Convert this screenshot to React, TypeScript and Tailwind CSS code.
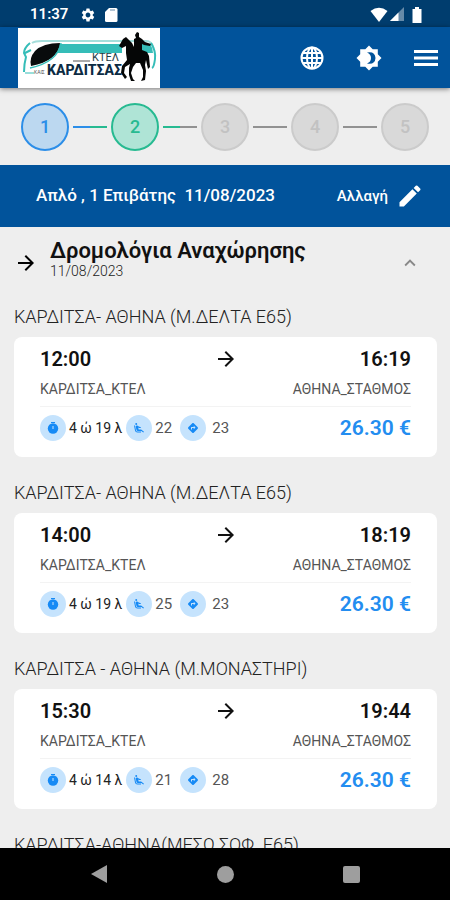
import type { ComponentType } from 'react';
import { MdAirlineSeatReclineExtra, MdArrowForward, MdDirections, MdEdit, MdExpandLess, MdSettings } from 'react-icons/md';

const routes = [
  { title: 'ΚΑΡΔΙΤΣΑ- ΑΘΗΝΑ (Μ.ΔΕΛΤΑ Ε65)', departs: '12:00', arrives: '16:19', duration: '4 ώ 19 λ', seats: 22, stops: 23 },
  { title: 'ΚΑΡΔΙΤΣΑ- ΑΘΗΝΑ (Μ.ΔΕΛΤΑ Ε65)', departs: '14:00', arrives: '18:19', duration: '4 ώ 19 λ', seats: 25, stops: 23 },
  { title: 'ΚΑΡΔΙΤΣΑ - ΑΘΗΝΑ (Μ.ΜΟΝΑΣΤΗΡΙ)', departs: '15:30', arrives: '19:44', duration: '4 ώ 14 λ', seats: 21, stops: 28 },
];

const steps = [
  { circle: 'border-[#2c8ee8] bg-[#bcd8f0] text-[#2c8ee8]', line: 'from-[#2c8ee8] to-[#27ba91]' },
  { circle: 'border-[#27ba91] bg-[#afe4d6] text-[#27ba91]', line: 'from-[#27ba91] to-[#929292]' },
  { circle: 'border-[#cbcbcb] bg-[#d9d9d9] text-[#c2c2c2]', line: 'from-[#929292] to-[#929292]' },
  { circle: 'border-[#cbcbcb] bg-[#d9d9d9] text-[#c2c2c2]', line: 'from-[#929292] to-[#929292]' },
  { circle: 'border-[#cbcbcb] bg-[#d9d9d9] text-[#c2c2c2]', line: '' },
];

const StatusBar = () => (
  <div className="flex h-[27px] shrink-0 items-center bg-[#003d6e] pt-0.5 pr-7 pl-[30px] text-white">
    <span className="text-[15px] font-semibold">11:37</span>
    <MdSettings className="ml-3 size-4" />
    <svg viewBox="0 0 14 16" className="ml-2 h-4 w-3.5" fill="currentColor">
      <path d="M5 1h7q1.500 0 1.500 1.500v11q0 1.500-1.500 1.500H2.500Q1 15 1 13.500V5z" />
      <path d="M6 3h5" stroke="#003d6e" strokeWidth="1.500" opacity="0.400" />
    </svg>
    <div className="ml-auto flex items-center">
      <svg viewBox="0 0 18 16" className="h-4 w-[18px]" fill="currentColor">
        <path d="M0.500 4Q9-2.500 17.500 4L9 15z" />
      </svg>
      <svg viewBox="0 0 15 15" className="ml-0.5 h-[15px] w-[15px]" fill="currentColor">
        <path d="M14 0v14H0z" opacity="0.400" />
        <path d="M8.500 5.500V14H0z" />
      </svg>
      <svg viewBox="0 0 10 16" className="ml-[7px] h-4 w-2.5" fill="currentColor">
        <path d="M3 0h4v2h2.500v14h-9V2H3z" />
      </svg>
    </div>
  </div>
);

const Logo = () => (
  <svg viewBox="0 0 142 60" className="h-[60px] w-[142px] bg-white" role="img" aria-label="ΚΤΕΛ ΚΑΡΔΙΤΣΑΣ">
    <path d="M41 16H104v9H34q5-4 7-9zM118 16h14q3 4 3 9h-17z" fill="#35bdb8" />
    <path d="M14 15Q17 13 24 13H128q5 0 7 5" fill="none" stroke="#a5dedb" strokeWidth="2" />
    <path d="M12 15Q6 20 6 25l2 4q-2 7-2 15M7 25l6-3M133 15q5 8 4 16t-3 9" fill="none" stroke="#35bdb8" strokeWidth="2" />
    <path d="M42 15q-2 18-29 23-2-8 4-15 8-8 25-8z" fill="#080b0c" />
    <path d="M43 15Q40 34 12 40" fill="none" stroke="#35bdb8" strokeWidth="1.500" />
    <path d="M55 33h17" stroke="#555" strokeWidth="1" />
    <path d="M7 45h9" stroke="#35bdb8" strokeWidth="1" />
    <text x="16" y="46" fontSize="5" fill="#555">ΚΑΙΣ</text>
    <text x="74" y="33" fontSize="11" fill="#1e3c45">ΚΤΕΛ</text>
    <text x="29" y="47" fontSize="14" fontWeight="800" fill="#0c2b43">ΚΑΡΔΙΤΣΑΣ</text>
    <path
      d="M101 18 105 11 108 9 110 11 114 15 116 19 116 11 118 10 117 7 119 4 121 5 121 9 124 11 127 14 133 16 132 18 126 17 124 16 124 22 129 24 131 28 132 39 130 41 128 32 127 37 128 43 127 52 123 53 125 49 125 42 122 35 118 35 115 39 113 45 115 51 117 53 113 53 111 47 111 40 112 36 107 39 106 45 109 49 107 51 103 45 104 38 109 32 108 25 108 18 104 20z"
      fill="#050606"
    />
  </svg>
);

const GlobeIcon = () => (
  <svg viewBox="0 0 24 24" className="size-6" fill="none" stroke="currentColor" strokeWidth="2">
    <circle cx="12" cy="12" r="10.500" />
    <ellipse cx="12" cy="12" rx="5" ry="10.500" />
    <path d="M12 1.500v21M1.500 12h21M3 7h18M3 17h18" />
  </svg>
);

const ThemeIcon = () => (
  <svg viewBox="0 0 26 26" className="size-[26px]" fill="currentColor">
    <path
      fillRule="evenodd"
      d="M13 0.500 16.700 4.200H21.800V9.300L25.500 13 21.800 16.700V21.800H16.700L13 25.500 9.300 21.800H4.200V16.700L0.500 13 4.200 9.300V4.200H9.300zM11 7.500Q15 9 15 13T11 18.500Q19 20 19.500 13 19 6 11 7.500z"
    />
  </svg>
);

const MenuIcon = () => (
  <svg viewBox="0 0 24 18" className="h-[18px] w-6" fill="none" stroke="currentColor" strokeWidth="3">
    <path d="M0 2.500h24M0 9h24M0 15.500h24" />
  </svg>
);

const Header = () => (
  <header className="relative flex h-[61px] shrink-0 items-center bg-[#01539b] pr-3 pl-[18px] text-white shadow-[0_1px_5px_rgba(0,0,0,0.5)]">
    <Logo />
    <div className="ml-auto flex items-center gap-8">
      <button type="button" aria-label="Γλώσσα"><GlobeIcon /></button>
      <button type="button" aria-label="Θέμα"><ThemeIcon /></button>
      <button type="button" aria-label="Μενού"><MenuIcon /></button>
    </div>
  </header>
);

const Stepper = () => (
  <ol className="flex h-[77px] shrink-0 items-center px-[21px]">
    {steps.map((step, index) => (
      <li key={index} className={step.line ? 'flex flex-1 items-center' : 'flex items-center'}>
        <span className={`flex size-12 shrink-0 items-center justify-center rounded-full border-2 text-lg font-medium ${step.circle}`}>
          {index + 1}
        </span>
        {step.line && <span className={`mx-1 h-0.5 flex-1 bg-linear-to-r from-50% to-50% ${step.line}`} />}
      </li>
    ))}
  </ol>
);

const StopwatchIcon = ({ className }: { className?: string }) => (
  <svg viewBox="0 0 12 12" className={className} fill="currentColor">
    <path d="M4 0h4v1H4z" />
    <circle cx="6" cy="6.500" r="5.200" />
    <path d="M6 4v3" stroke="#c5e3fd" strokeWidth="1" />
  </svg>
);

const Badge = ({ icon: Icon }: { icon: ComponentType<{ className?: string }> }) => (
  <span className="flex size-[26px] shrink-0 items-center justify-center rounded-full bg-[#c5e3fd] text-[#168af5]">
    <Icon className="size-3" />
  </span>
);

const RouteCard = ({ route }: { route: (typeof routes)[number] }) => (
  <section className="mb-5">
    <h3 className="mb-1 text-lg leading-8 font-light text-[#222]">{route.title}</h3>
    <article className="h-[120px] rounded-lg bg-white px-[26px] pt-2.5">
      <div className="flex items-center justify-between text-xl leading-6 font-semibold text-[#111]">
        <span className="flex-1">{route.departs}</span>
        <MdArrowForward className="size-6" />
        <span className="flex-1 text-right">{route.arrives}</span>
      </div>
      <div className="mt-2 flex justify-between text-sm leading-5 text-[#555]">
        <span>ΚΑΡΔΙΤΣΑ_ΚΤΕΛ</span>
        <span>ΑΘΗΝΑ_ΣΤΑΘΜΟΣ</span>
      </div>
      <div className="mt-[7px] flex items-center border-t border-[#f3f3f3] pt-2">
        <Badge icon={StopwatchIcon} />
        <span className="mr-1 ml-[3px] text-sm leading-6 text-[#222]">{route.duration}</span>
        <Badge icon={MdAirlineSeatReclineExtra} />
        <span className="mr-2 ml-[3px] text-[15px] leading-6 text-[#555]">{route.seats}</span>
        <Badge icon={MdDirections} />
        <span className="ml-1.5 text-[15px] leading-6 text-[#555]">{route.stops}</span>
        <span className="ml-auto text-[21px] leading-6 font-semibold text-[#238df0]">26.30 €</span>
      </div>
    </article>
  </section>
);

const NavigationBar = () => (
  <nav className="flex h-[52px] shrink-0 items-center justify-around bg-black px-9 text-[#9e9e9e]">
    <button type="button" aria-label="Πίσω">
      <svg viewBox="0 0 18 20" className="h-5 w-[18px]" fill="currentColor"><path d="M17 1v18L1 10z" /></svg>
    </button>
    <button type="button" aria-label="Αρχική" className="size-[17px] rounded-full bg-[#9e9e9e]" />
    <button type="button" aria-label="Πρόσφατα" className="size-[17px] rounded-xs bg-[#9e9e9e]" />
  </nav>
);

export default function App() {
  return (
    <div className="flex h-screen flex-col overflow-hidden bg-[#eee] font-[Roboto,sans-serif]">
      <StatusBar />
      <Header />
      <Stepper />
      <div className="flex h-[62px] shrink-0 items-center justify-between bg-[#01539b] pr-[26px] pl-9 text-white">
        <span className="text-[17px] font-medium whitespace-pre">Απλό , 1 Επιβάτης  11/08/2023</span>
        <button type="button" className="flex items-center gap-2 text-[15px] font-medium">
          Αλλαγή
          <MdEdit className="size-7" />
        </button>
      </div>
      <main className="min-h-0 flex-1 overflow-hidden pr-[13px] pl-3.5">
        <button type="button" className="flex w-full items-center pt-3 pr-4 text-left">
          <MdArrowForward className="mr-3 size-6 shrink-0" />
          <span className="flex-1 pb-2">
            <span className="block text-[22px] leading-6 font-semibold text-[#111]">Δρομολόγια Αναχώρησης</span>
            <span className="block text-sm leading-4 font-light text-[#222]">11/08/2023</span>
          </span>
          <MdExpandLess className="size-[22px] text-[#888]" />
        </button>
        <div className="mt-3.5">
          {routes.map((route) => (
            <RouteCard key={route.departs} route={route} />
          ))}
          <h3 className="text-lg leading-8 font-light whitespace-nowrap text-[#222]">ΚΑΡΔΙΤΣΑ-ΑΘΗΝΑ(ΜΕΣΩ ΣΟΦ. Ε65)</h3>
        </div>
      </main>
      <NavigationBar />
    </div>
  );
}
